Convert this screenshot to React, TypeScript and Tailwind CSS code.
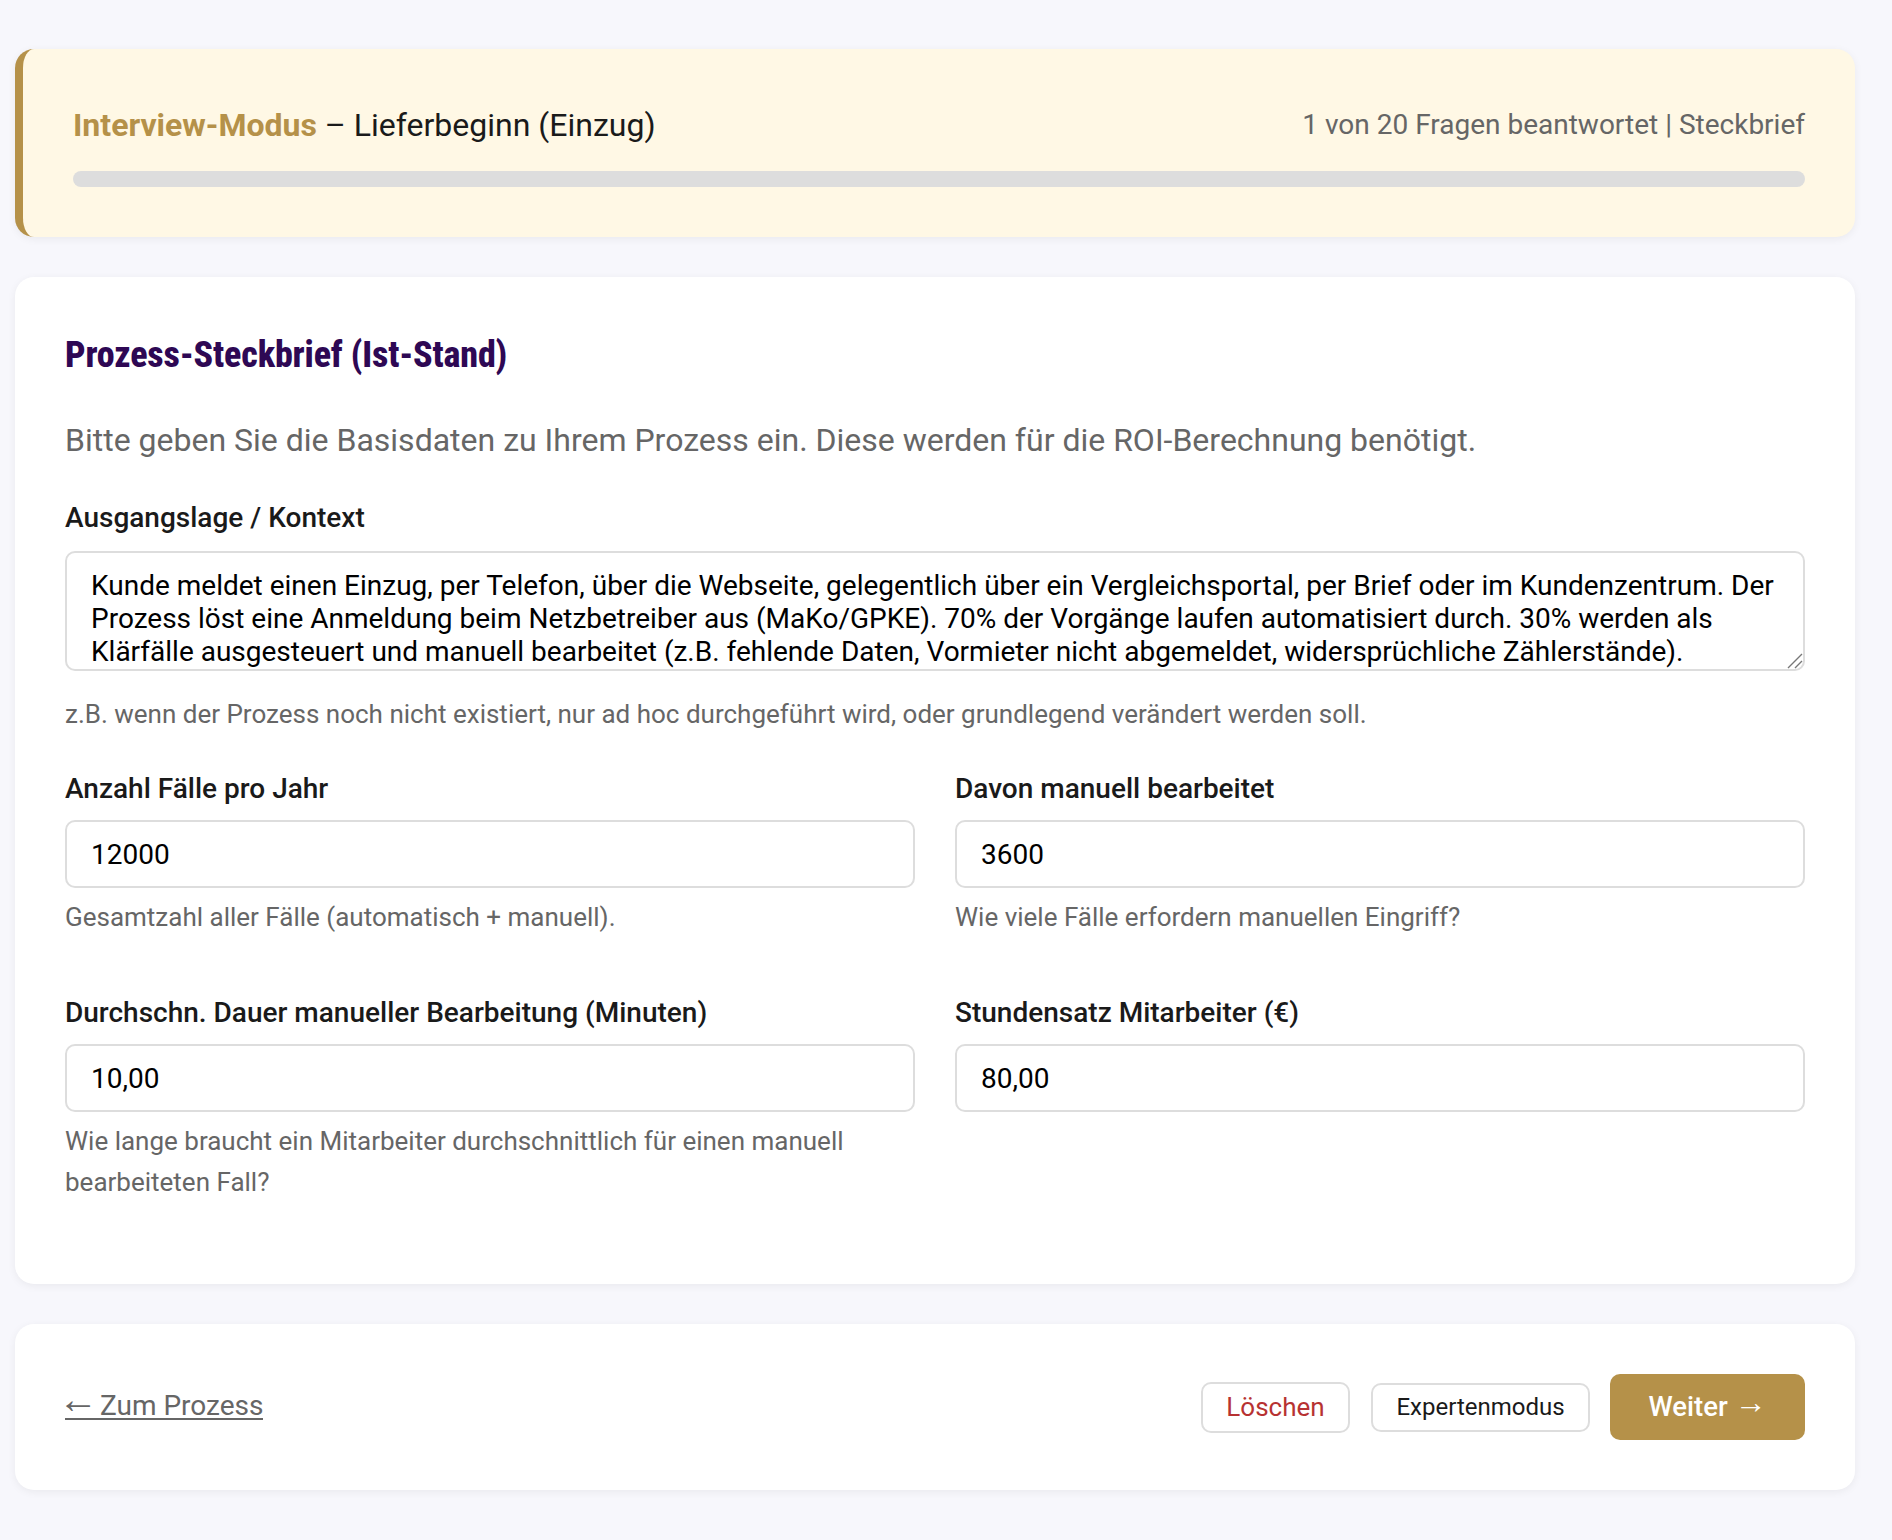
import React from "react";

const inputClass =
  "h-[68px] w-full rounded-[10px] border-2 border-[#dddddd] bg-white px-6 text-[28px] text-black outline-none";

function Field({ label, value, hint }: { label: string; value: string; hint: string }) {
  return (
    <div className="flex flex-col">
      <label className="mb-3 text-[28px] leading-[39px] font-medium text-[#1a1a1a]">{label}</label>
      <input className={inputClass} readOnly type="text" value={value} />
      <p className="mt-[9px] text-[26px] leading-[41px] text-[#666666]">{hint}</p>
    </div>
  );
}

export default function App() {
  return (
    <div
      className="min-h-screen bg-[#f7f7fc] pt-[49px] pr-[37px] pb-[50px] pl-[15px] text-[#1a1a1a]"
      style={{ fontFamily: 'Roboto, "Liberation Sans", sans-serif' }}
    >
      <div className="rounded-[19px] border-l-8 border-[#b59149] bg-[#fff8e5] pt-[49px] pr-[50px] pb-[50px] pl-[50px] shadow-[0_2px_8px_rgba(0,0,0,0.06)]">
        <div className="mb-[19px] flex items-center justify-between">
          <h2 className="text-[32px] leading-[54px] font-normal">
            <span className="font-bold text-[#b59149]">Interview-Modus</span> – Lieferbeginn (Einzug)
          </h2>
          <span className="text-[28px] text-[#666666]">1 von 20 Fragen beantwortet | Steckbrief</span>
        </div>
        <div className="h-4 rounded-lg bg-[#dddddd]" />
      </div>

      <div className="mt-10 rounded-[19px] bg-white px-[50px] pt-[51px] pb-[81px] shadow-[0_2px_8px_rgba(0,0,0,0.06)]">
        <h3 className="text-[36px] leading-[54px] font-extrabold tracking-[-0.15px] text-[#2e0854] [font-stretch:75%]">
          Prozess-Steckbrief (Ist-Stand)
        </h3>
        <p className="mt-[36px] text-[32px] leading-[45px] text-[#666666]">
          Bitte geben Sie die Basisdaten zu Ihrem Prozess ein. Diese werden für die ROI-Berechnung benötigt.
        </p>

        <label className="mt-[35px] mb-[14px] block text-[28px] leading-[39px] font-medium">Ausgangslage / Kontext</label>
        <div className="relative">
          <textarea
            className="block h-[120px] w-full resize-none rounded-[10px] border-2 border-[#dddddd] bg-white px-6 pt-[16px] text-[28px] leading-[33px] text-black outline-none"
            readOnly
            value="Kunde meldet einen Einzug, per Telefon, über die Webseite, gelegentlich über ein Vergleichsportal, per Brief oder im Kundenzentrum. Der Prozess löst eine Anmeldung beim Netzbetreiber aus (MaKo/GPKE). 70% der Vorgänge laufen automatisiert durch. 30% werden als Klärfälle ausgesteuert und manuell bearbeitet (z.B. fehlende Daten, Vormieter nicht abgemeldet, widersprüchliche Zählerstände)."
          />
          <svg className="absolute right-[2px] bottom-[2px] h-4 w-4" fill="none" stroke="#777777" strokeWidth="1.4" viewBox="0 0 16 16">
            <path d="M1 15 15 1M8 15l7-7" />
          </svg>
        </div>
        <p className="mt-[23px] text-[26px] leading-[41px] text-[#666666]">
          z.B. wenn der Prozess noch nicht existiert, nur ad hoc durchgeführt wird, oder grundlegend verändert werden soll.
        </p>

        <div className="mt-[34px] grid grid-cols-2 gap-x-10 gap-y-[55px]">
          <Field hint="Gesamtzahl aller Fälle (automatisch + manuell)." label="Anzahl Fälle pro Jahr" value="12000" />
          <Field hint="Wie viele Fälle erfordern manuellen Eingriff?" label="Davon manuell bearbeitet" value="3600" />
          <Field
            hint="Wie lange braucht ein Mitarbeiter durchschnittlich für einen manuell bearbeiteten Fall?"
            label="Durchschn. Dauer manueller Bearbeitung (Minuten)"
            value="10,00"
          />
          <Field hint="" label="Stundensatz Mitarbeiter (€)" value="80,00" />
        </div>
      </div>

      <div className="mt-10 flex h-[166px] items-center justify-between rounded-[19px] bg-white px-[50px] shadow-[0_2px_8px_rgba(0,0,0,0.06)]">
        <a className="inline-block border-b-2 border-[#666666] text-[28px] leading-[24px] text-[#666666]" href="#">
          <span
            className="relative -top-[2px] mr-[-5px] ml-[-7px] text-[40px] leading-[0]"
            style={{ fontFamily: '"Liberation Sans", sans-serif' }}
          >
            ←
          </span>{" "}
          Zum Prozess
        </a>
        <div className="flex items-center gap-5">
          <button className="mr-px h-[51px] w-[149px] rounded-[10px] border-2 border-[#dddddd] bg-white text-[26px] text-[#b73232]" type="button">
            Löschen
          </button>
          <button className="h-[49px] w-[219px] rounded-[10px] border-2 border-[#dddddd] bg-white text-[24px] text-[#1a1a1a]" type="button">
            Expertenmodus
          </button>
          <button className="h-[66px] w-[195px] rounded-[10px] bg-[#b59149] text-[27.5px] font-medium text-white" type="button">
            Weiter{" "}
            <span className="relative -top-[3px] text-[32px] leading-none font-bold" style={{ fontFamily: '"Liberation Sans", sans-serif' }}>
              →
            </span>
          </button>
        </div>
      </div>
    </div>
  );
}
